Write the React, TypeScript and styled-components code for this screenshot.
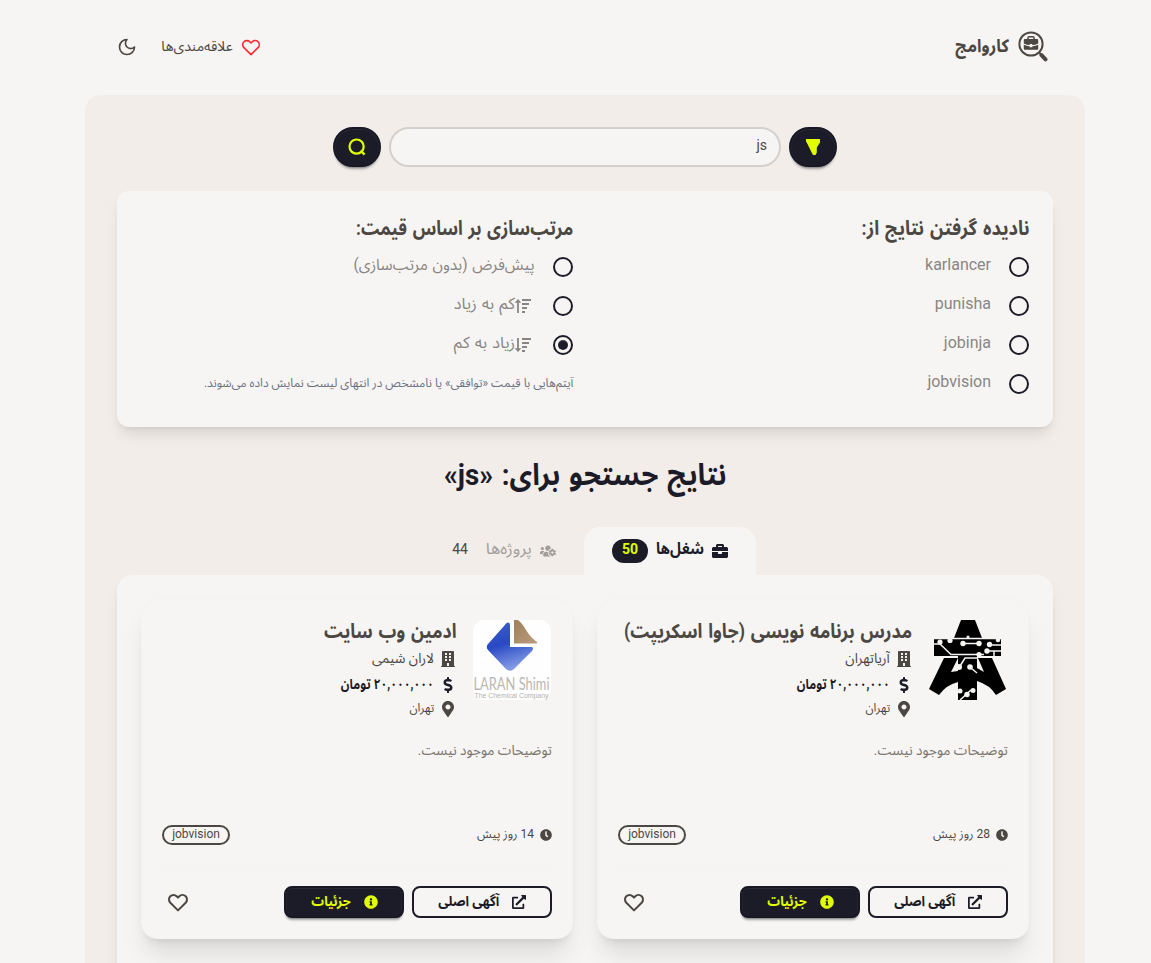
import React from "react";
import styled, { createGlobalStyle, css } from "styled-components";
import {
  FaBriefcase,
  FaBuilding,
  FaClock,
  FaDollarSign,
  FaExternalLinkAlt,
  FaInfoCircle,
  FaMapMarkerAlt,
  FaUsersCog,
} from "react-icons/fa";

const c = {
  base100: "oklch(97% 0.0035 67.78)",
  base200: "oklch(95% 0.0081 61.42)",
  content: "oklch(40% 0.0081 61.42)",
  primary: "oklch(23.27% 0.0249 284.3)",
  lime: "oklch(94.22% 0.2505 117.44)",
};

const Global = createGlobalStyle`
  * { box-sizing: border-box; }
  html, body { margin: 0; padding: 0; background: ${c.base100}; }
  body {
    height: 963px;
    overflow: hidden;
    color: ${c.content};
    font-family: Roboto, "Noto Sans Arabic", "DejaVu Sans", sans-serif;
    font-size: 16px;
  }
  h1, h2, h3, p { margin: 0; }
  button { font: inherit; cursor: pointer; }
  svg { display: block; flex: none; }
`;

/* Single line of text; $k narrows or widens the glyphs, $dy nudges the baseline, $w fixes the layout width. */
const Text = styled.span<{ $size?: number; $weight?: number; $k?: number; $color?: string; $dy?: number; $from?: string; $w?: number; $gap?: number }>`
  display: block;
  white-space: nowrap;
  line-height: 1;
  width: ${(p) => (p.$w ? `${p.$w}px` : "max-content")};
  font-size: ${(p) => p.$size ?? 14}px;
  font-weight: ${(p) => p.$weight ?? 400};
  word-spacing: ${(p) => p.$gap ?? 0}px;
  color: ${(p) => p.$color ?? "inherit"};
  > span {
    display: block;
    width: max-content;
    transform: translateY(${(p) => p.$dy ?? 0}px) scaleX(${(p) => p.$k ?? 1});
    transform-origin: ${(p) => p.$from ?? "right"} center;
  }
`;

type LabelProps = Omit<React.ComponentProps<typeof Text>, "children"> & { children: React.ReactNode };
const Label = ({ children, ...rest }: LabelProps) => (
  <Text {...rest}><span>{children}</span></Text>
);

const Page = styled.div`
  width: 1000px;
  height: 963px;
  margin-left: 85px;
`;

const Header = styled.header`
  height: 95px;
  padding: 0 37px 2px 32px;
  display: flex;
  align-items: center;
  justify-content: space-between;
`;

const Brand = styled.div`
  display: flex;
  align-items: center;
  gap: 9px;
`;

const HeaderActions = styled.div`
  display: flex;
  align-items: center;
  gap: 24px;
`;

const Favourites = styled.a`
  display: flex;
  align-items: center;
  gap: 7px;
  padding-right: 1px;
`;

const Main = styled.main`
  height: 868px;
  overflow: hidden;
  padding: 32px 32px 0;
  background: ${c.base200};
  border-radius: 16px 16px 0 0;
`;

const SearchRow = styled.form`
  display: flex;
  justify-content: center;
  gap: 8px;
`;

const solid = css`
  background: ${c.primary};
  color: ${c.lime};
  border: 2px solid oklch(22% 0.0249 284.3);
  box-shadow: 0 0.5px 0 0.5px rgba(255, 255, 255, 0.06) inset, 0 3px 2px -2px rgba(27, 27, 41, 0.3),
    0 4px 3px -2px rgba(27, 27, 41, 0.3);
`;

const RoundButton = styled.button`
  ${solid}
  width: 48px;
  height: 40px;
  padding: 0;
  border-radius: 20px;
  display: flex;
  align-items: center;
  justify-content: center;
`;

const SearchField = styled.div`
  width: 392px;
  height: 40px;
  padding: 0 12px;
  display: flex;
  align-items: center;
  background: ${c.base100};
  border: 2px solid oklch(86% 0.0065 61.42);
  border-radius: 20px;
`;

const FilterPanel = styled.section`
  height: 236px;
  margin-top: 24px;
  padding: 24px;
  display: grid;
  grid-template-columns: minmax(0, 1fr) minmax(0, 1fr);
  column-gap: 24px;
  background: ${c.base100};
  border-radius: 12px;
  box-shadow: 0 10px 15px -3px rgba(0, 0, 0, 0.1), 0 4px 6px -4px rgba(0, 0, 0, 0.1);
`;

const GroupTitle = styled.div`
  height: 32px;
  padding-top: 3px;
`;

const Option = styled.label`
  height: 39px;
  display: flex;
  align-items: center;
  gap: 18px;
  color: oklch(62% 0.006 61.42);
`;

const Radio = styled.span<{ $on?: boolean }>`
  width: 20px;
  height: 20px;
  display: grid;
  place-items: center;
  border: 2px solid ${c.primary};
  border-radius: 50%;
  &::before {
    content: "";
    width: 10px;
    height: 10px;
    border-radius: 50%;
    background: ${(p) => (p.$on ? c.primary : "transparent")};
    box-shadow: ${(p) => (p.$on ? "inset 0 2px 1px -1px rgba(255, 255, 255, 0.15)" : "none")};
  }
`;

const SortLabel = styled.span`
  display: flex;
  align-items: center;
  padding-right: 4px;
`;

const Heading = styled.h1`
  height: 100px;
  display: flex;
  justify-content: center;
  padding-top: 33px;
`;

const Tabs = styled.div`
  height: 48px;
  display: flex;
  padding-right: 297px;
`;

const Tab = styled.div<{ $active?: boolean }>`
  width: 172px;
  padding-right: 28px;
  display: flex;
  align-items: center;
  gap: 8px;
  border-radius: 16px 16px 0 0;
  background: ${(p) => (p.$active ? c.base100 : "transparent")};
  color: ${(p) => (p.$active ? c.primary : "oklch(70% 0.006 61.42)")};
`;

const Count = styled.span<{ $active?: boolean }>`
  height: 24px;
  width: 36px;
  display: grid;
  place-items: center;
  border-radius: 16px;
  background: ${(p) => (p.$active ? c.primary : "transparent")};
  color: ${(p) => (p.$active ? c.lime : c.content)};
`;

const Results = styled.section`
  height: 420px;
  padding: 24px;
  display: grid;
  grid-template-columns: minmax(0, 1fr) minmax(0, 1fr);
  gap: 24px;
  align-items: start;
  background: ${c.base100};
  border-radius: 16px 16px 0 0;
  box-shadow: 0 10px 15px -3px rgba(0, 0, 0, 0.1), 0 4px 6px -4px rgba(0, 0, 0, 0.1);
`;

const Card = styled.article`
  height: 340px;
  padding: 20px;
  display: flex;
  flex-direction: column;
  background: ${c.base100};
  border: 1px solid oklch(96.4% 0.004 65);
  border-radius: 16px;
  box-shadow: 0 20px 25px -5px rgba(0, 0, 0, 0.1), 0 8px 10px -6px rgba(0, 0, 0, 0.1);
`;

const CardTop = styled.div`
  height: 100px;
  display: flex;
  gap: 16px;
`;

const Logo = styled.div`
  width: 80px;
  height: 80px;
  padding: 0 1px;
`;

const Facts = styled.div`
  display: flex;
  flex-direction: column;
`;

const CardTitle = styled.h2`
  height: 26px;
  padding-top: 1px;
`;

const Fact = styled.div<{ $h: number; $strong?: boolean }>`
  height: ${(p) => p.$h}px;
  display: flex;
  align-items: center;
  gap: 6px;
  color: ${(p) => (p.$strong ? c.primary : c.content)};
`;

const Description = styled.p`
  height: 95px;
  padding-top: 23px;
`;

const Meta = styled.div`
  height: 41px;
  display: flex;
  align-items: center;
  justify-content: space-between;
`;

const Age = styled.span`
  display: flex;
  align-items: center;
  gap: 6px;
`;

const Badge = styled.span`
  width: 68px;
  height: 20px;
  display: grid;
  place-items: center;
  border: 2px solid ${c.content};
  border-radius: 10px;
`;

const Actions = styled.footer`
  margin-top: 13px;
  padding-top: 17px;
  border-top: 1px solid oklch(96.2% 0.0045 64);
  display: flex;
  align-items: center;
  gap: 8px;
`;

const ActionButton = styled.button<{ $solid?: boolean }>`
  width: ${(p) => (p.$solid ? 120 : 140)}px;
  height: 32px;
  padding: 0;
  display: flex;
  align-items: center;
  justify-content: center;
  gap: 13px;
  border-radius: 8px;
  border: 2px solid ${c.primary};
  background: transparent;
  color: ${c.primary};
  ${(p) => p.$solid && solid}
`;

const LikeButton = styled.button`
  width: 32px;
  height: 32px;
  margin-right: auto;
  padding: 0 0 1px;
  display: grid;
  place-items: center;
  border: 0;
  background: transparent;
  color: ${c.content};
`;

const Heart = ({ size, color = "currentColor", stroke = 2 }: { size: number; color?: string; stroke?: number }) => (
  <svg width={size} height={size} viewBox="0 0 24 24" fill="none" stroke={color} strokeWidth={stroke} strokeLinecap="round" strokeLinejoin="round">
    <path d="M4.318 6.318a4.5 4.5 0 000 6.364L12 20.364l7.682-7.682a4.5 4.5 0 00-6.364-6.364L12 7.636l-1.318-1.318a4.5 4.5 0 00-6.364 0z" />
  </svg>
);

const Moon = () => (
  <svg width="20" height="20" viewBox="0 0 24 24" fill="none" stroke="currentColor" strokeWidth={2} strokeLinecap="round" strokeLinejoin="round">
    <path d="M12 3a6 6 0 0 0 9 9 9 9 0 1 1-9-9z" />
  </svg>
);

const SearchGlyph = () => (
  <svg width="18" height="18" viewBox="0 0 18 18" fill="none" stroke="currentColor" strokeWidth={2.2}>
    <circle cx="8.6" cy="8.6" r="7.1" />
    <path d="M12.6 12.6l4 4" />
  </svg>
);

const FilterGlyph = () => (
  <svg width="14" height="16" viewBox="0 0 14 16" fill="currentColor">
    <path d="M0 0h14v3.4L10.8 8.600v5L9.500 16H7L5.500 13.200 1 4 0 2.400z" />
  </svg>
);

const BrandMark = () => (
  <svg width="30" height="31" viewBox="0 0 30 31" fill="none" stroke="currentColor">
    <circle cx="13" cy="13" r="11.6" strokeWidth="2" />
    <path d="M21.500 22l2 2" strokeWidth="2" />
    <path d="M23.500 24.200l4 4.200" strokeWidth="4" strokeLinecap="round" />
    <path d="M10 8V6.800q0-1 1-1h4q1 0 1 1V8" strokeWidth="1.500" />
    <path d="M6.800 8h12.400q1 0 1 1v3.400q-3 1.500-6 1.600v-1h-2.400v1q-3-.1-6-1.600V9q0-1 1-1zM5.800 13.800q2.800 1.400 5.800 1.500v.9h2.800v-.9q3-.1 5.800-1.500v4q0 1-1 1H6.800q-1 0-1-1z" fill="currentColor" stroke="none" />
  </svg>
);

const SortGlyph = ({ up }: { up?: boolean }) => (
  <svg width="16" height="16" viewBox="0 0 16 16" fill="currentColor" overflow="visible">
    <path d="M7 1h9v2H7zM7 5h7v1.900H7zM7 9h5v1.900H7zM7 13h3v2H7z" />
    {up ? <path d="M3 1l3.300 3.800H3.900V15H2.100V4.800H-.3z" /> : <path d="M3 15l3.300-3.800H3.900V1H2.100v10.200H-.3z" />}
  </svg>
);

const CircuitLogo = () => (
  <svg width="78" height="80" viewBox="0 0 78 80">
    <path d="M32 0h14l7 18H25z" />
    <path d="M5 18.500h67V36H5zM15 38h14l-7 14 7-1v11Q17 65 10 75L0 69zM49 38h14l14 31-10 6Q61 65 48 61V48l7 4z" />
    <path d="M29 36h19v44H29z" />
    <g fill="none" stroke="#f5f4f2" strokeWidth="1.500">
      <path d="M5 18.500h67M5 24h6l11 10.500h33M34 23.500h17M61 25h11M57 31h15M31 46l5-8h13M42 48l6 5M31 80l11-10M65 31v5" />
    </g>
    <g fill="#f5f4f2">
      <circle cx="11" cy="22" r="2.600" /><circle cx="21" cy="20.500" r="2.600" /><circle cx="34" cy="23.500" r="2.700" /><circle cx="50" cy="23.500" r="2.700" />
      <circle cx="60.500" cy="24.500" r="2.700" /><circle cx="58" cy="31" r="2.700" /><circle cx="50" cy="34.500" r="2.600" /><circle cx="41" cy="47" r="2.800" />
      <circle cx="30" cy="47" r="3" /><circle cx="31" cy="71" r="2.500" /><circle cx="38" cy="74.500" r="2.700" /><circle cx="44" cy="70.500" r="2.500" />
      <circle cx="39" cy="17" r="1.500" /><circle cx="69" cy="20" r="2.300" />
    </g>
  </svg>
);

const LaranLogo = () => (
  <svg width="78" height="80" viewBox="0 0 78 80">
    <defs>
      <linearGradient id="blue" x1="0" y1="0" x2="0.3" y2="1">
        <stop offset="0" stopColor="#3d60c4" />
        <stop offset="0.5" stopColor="#2948c6" />
        <stop offset="1" stopColor="#7f99e2" />
      </linearGradient>
      <linearGradient id="tan" x1="0" y1="0" x2="1" y2="1">
        <stop offset="0" stopColor="#a08058" />
        <stop offset="1" stopColor="#b99c80" />
      </linearGradient>
    </defs>
    <rect width="78" height="80" rx="11" fill="#fefefe" />
    <path d="M35 2.500q2 0 2 3V27h22q2 1 0 4L41 49q-4 3.500-8 0L15 30q-2.500-3 0-6L31 6q2-3.500 4-3.500z" fill="url(#blue)" />
    <path d="M41 0h4q4 3 8 10 5 8 11 12 1 1.500-2 1.500H41z" fill="url(#tan)" />
    <text x="0.500" y="70" textLength="76" lengthAdjust="spacingAndGlyphs" fontFamily="Lato" fontSize="16.500" fontWeight="400" fill="#bab7b4" direction="ltr">LARAN Shimi</text>
    <text x="1.500" y="78" textLength="74" lengthAdjust="spacingAndGlyphs" fontFamily="Liberation Sans" fontSize="6.500" fill="#b5b1ae" direction="ltr">The Chemical Company</text>
  </svg>
);

type Job = { title: string; k: number; company: string; ck: number; days: string; logo: React.ReactNode };

const jobs: Job[] = [
  { title: "مدرس برنامه نویسی (جاوا اسکریپت)", k: 0.889, company: "آریاتهران", ck: 0.97, days: "28", logo: <CircuitLogo /> },
  { title: "ادمین وب سایت", k: 0.881, company: "لاران شیمی", ck: 0.97, days: "14", logo: <LaranLogo /> },
];

const JobCard = ({ job }: { job: Job }) => (
  <Card>
    <CardTop>
      <Logo>{job.logo}</Logo>
      <Facts>
        <CardTitle><Label $size={20} $weight={700} $gap={1.5} $k={job.k}>{job.title}</Label></CardTitle>
        <Fact $h={26}><FaBuilding size={16} /><Label $size={14} $k={job.ck} $dy={-1}>{job.company}</Label></Fact>
        <Fact $h={26} $strong><FaDollarSign size={16} /><Label $size={14} $weight={700} $k={0.847} $dy={-1}>۲۰,۰۰۰,۰۰۰ تومان</Label></Fact>
        <Fact $h={22}><FaMapMarkerAlt size={16} /><Label $size={12} $k={0.98} $dy={-1}>تهران</Label></Fact>
      </Facts>
    </CardTop>
    <Description><Label $size={14} $k={0.972} $color="oklch(56% 0.007 61.42)">توضیحات موجود نیست.</Label></Description>
    <Meta>
      <Age><FaClock size={12} /><Label $size={12} $dy={-1}>{job.days} روز پیش</Label></Age>
      <Badge><Label $size={12} $dy={-1}>jobvision</Label></Badge>
    </Meta>
    <Actions>
      <ActionButton><FaExternalLinkAlt size={14} /><Label $size={14} $weight={700} $k={0.92} $w={61} $dy={-1}>آگهی اصلی</Label></ActionButton>
      <ActionButton $solid><FaInfoCircle size={14} /><Label $size={14} $weight={700} $k={0.9} $w={40} $dy={-1}>جزئیات</Label></ActionButton>
      <LikeButton><Heart size={24} /></LikeButton>
    </Actions>
  </Card>
);

export default function App() {
  return (
    <>
      <Global />
      <Page dir="rtl">
        <Header>
          <Brand><BrandMark /><Label $size={18} $weight={700} $k={0.91} $dy={-1.5}>کاروامج</Label></Brand>
          <HeaderActions>
            <Favourites><Heart size={22} color="#fb2c36" stroke={1.8} /><Label $size={14} $w={72} $k={1.01} $dy={-1}>علاقه‌مندی‌ها</Label></Favourites>
            <Moon />
          </HeaderActions>
        </Header>
        <Main>
          <SearchRow>
            <RoundButton type="button"><FilterGlyph /></RoundButton>
            <SearchField><Label $size={14} $dy={-2}>js</Label></SearchField>
            <RoundButton type="button"><SearchGlyph /></RoundButton>
          </SearchRow>
          <FilterPanel>
            <div>
              <GroupTitle><Label $size={20} $weight={700} $gap={1.5} $k={0.91}>نادیده گرفتن نتایج از:</Label></GroupTitle>
              {["karlancer", "punisha", "jobinja", "jobvision"].map((s) => (
                <Option key={s}><Radio /><Label $size={16} $dy={-2}>{s}</Label></Option>
              ))}
            </div>
            <div>
              <GroupTitle><Label $size={20} $weight={700} $gap={1.5} $k={0.861}>مرتب‌سازی بر اساس قیمت:</Label></GroupTitle>
              <Option><Radio /><Label $size={16} $gap={1} $k={0.96} $dy={-2}>پیش‌فرض (بدون مرتب‌سازی)</Label></Option>
              <Option><Radio /><SortLabel><SortGlyph up /><Label $size={16} $gap={1} $k={1.02} $dy={-2}>کم به زیاد</Label></SortLabel></Option>
              <Option><Radio $on /><SortLabel><SortGlyph /><Label $size={16} $gap={1} $k={1.02} $dy={-2}>زیاد به کم</Label></SortLabel></Option>
              <Option as="p"><Label $size={12} $k={0.992} $dy={-1} $color="#6a7282">آیتم‌هایی با قیمت «توافقی» یا نامشخص در انتهای لیست نمایش داده می‌شوند.</Label></Option>
            </div>
          </FilterPanel>
          <Heading><Label $size={30} $weight={700} $color={c.primary} $gap={2} $k={0.922} $from="center">نتایج جستجو برای: «js»</Label></Heading>
          <Tabs>
            <Tab $active>
              <FaBriefcase size={16} /><Label $size={16} $weight={700} $w={48} $k={0.925} $dy={-2}>شغل‌ها</Label>
              <Count $active><Label $size={14} $weight={700} $dy={-2}>50</Label></Count>
            </Tab>
            <Tab>
              <FaUsersCog size={16} /><Label $size={16} $w={46} $k={1.05} $dy={-2}>پروژه‌ها</Label>
              <Count><Label $size={14} $dy={-2}>44</Label></Count>
            </Tab>
          </Tabs>
          <Results>
            {jobs.map((j) => <JobCard key={j.title} job={j} />)}
          </Results>
        </Main>
      </Page>
    </>
  );
}
